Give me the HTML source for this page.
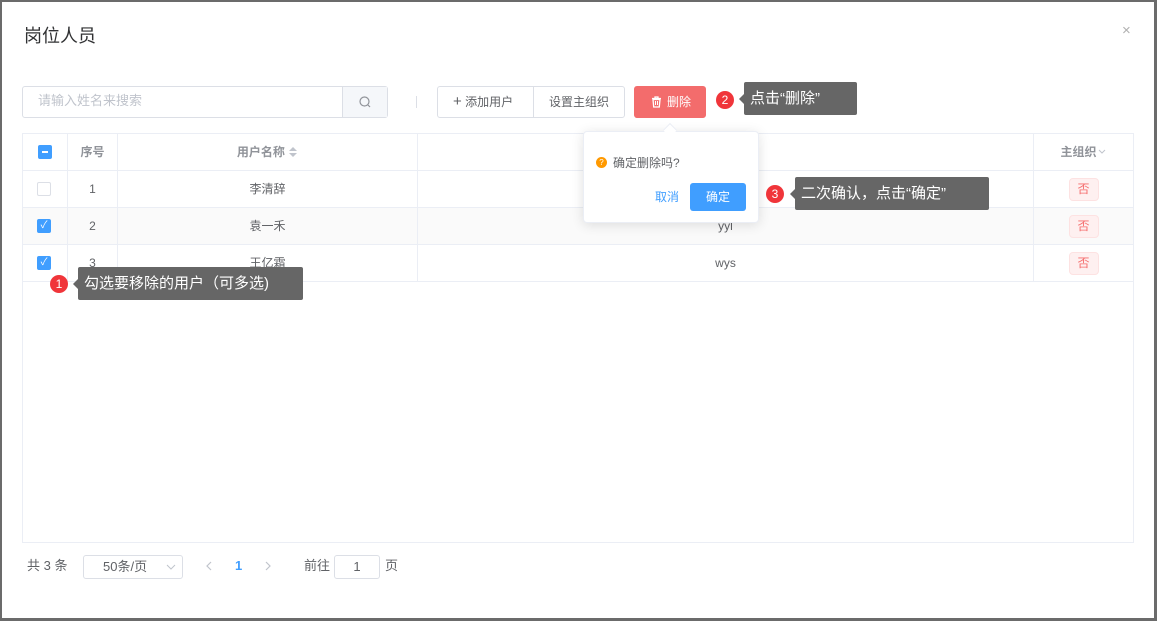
<!DOCTYPE html>
<html><head><meta charset="utf-8"><style>
*{box-sizing:border-box;margin:0;padding:0}
body{width:1157px;height:621px;background:#6b6b6b;font-family:"Liberation Sans","Noto Sans CJK SC",sans-serif;position:relative;overflow:hidden;font-size:12px;color:#606266}
.dlg{position:absolute;left:2px;top:2px;width:1152px;height:616px;background:#fff}
.a{position:absolute}
.title{left:22px;top:22px;font-size:18px;color:#303133;line-height:24px}
.tbl{left:22px;top:133px;width:1112px;height:410px;border:1px solid #ebeef5}
.row{position:absolute;left:0;width:1110px;height:37px;border-bottom:1px solid #ebeef5}
.c{position:absolute;top:0;height:36px;line-height:36px;text-align:center;border-right:1px solid #ebeef5}
.cb{position:absolute;left:14px;top:11px;width:14px;height:14px;border:1px solid #dcdfe6;border-radius:2px;background:#fff}
.cb.on{background:#409eff;border-color:#409eff}
.tag{display:inline-block;width:30px;height:23px;line-height:21px;border:1px solid #fde2e2;background:#fef0f0;color:#f56c6c;border-radius:4px;margin-top:7px}
.badge{width:18px;height:18px;border-radius:50%;background:#f0353a;color:#fff;text-align:center;line-height:18px;font-size:12px}
.tip{background:#666;color:#fff;font-size:15px;padding-left:6px;border-radius:2px}
.tip:before{content:"";position:absolute;left:-5px;top:50%;margin-top:-5px;border:5px solid transparent;border-left:0;border-right-color:#666}
.p{line-height:16px;font-size:13px}
</style></head><body>
<div class="dlg">
<div class="a title">岗位人员</div>
<div class="a" style="left:1120px;top:20px;color:#b0b0b0;font-size:15px">×</div>
</div>
<div class="a" style="left:22px;top:86px;width:366px;height:32px;border:1px solid #dcdfe6;border-radius:3px;"></div>
<div class="a" style="left:342px;top:87px;width:45px;height:30px;background:#f5f7fa;border-left:1px solid #dcdfe6"></div>
<svg class="a" style="left:358px;top:95px" width="14" height="14" viewBox="0 0 14 14"><circle cx="6.5" cy="6.5" r="4.5" fill="none" stroke="#909399" stroke-width="1.2"/><path d="M10 10l2 2" stroke="#909399" stroke-width="1.2"/></svg>
<div class="a" style="left:38px;top:93px;color:#c0c4cc;font-size:13px;line-height:16px">请输入姓名来搜索</div>
<div class="a" style="left:416px;top:96px;width:1px;height:12px;background:#dcdfe6"></div>
<div class="a" style="left:437px;top:86px;width:188px;height:32px;border:1px solid #dcdfe6;border-radius:3px"></div>
<div class="a" style="left:533px;top:87px;width:1px;height:30px;background:#dcdfe6"></div>
<div class="a" style="left:453px;top:94px;line-height:16px;color:#606266"><span style="font-size:15px">+</span> 添加用户</div>
<div class="a" style="left:549px;top:94px;line-height:16px">设置主组织</div>
<div class="a" style="left:634px;top:86px;width:72px;height:32px;background:#f36c6c;border-radius:3px;color:#fff;line-height:32px;padding-left:33px">删除</div>
<svg class="a" style="left:651px;top:96px" width="11" height="12" viewBox="0 0 11 12"><path d="M1 2.5h9M4 2.5V1h3v1.5M2 3.5l.7 7.5h5.6L9 3.5z" fill="none" stroke="#fff" stroke-width="1.3"/><path d="M4.5 5v4M6.5 5v4" stroke="#fff"/></svg>
<div class="a badge" style="left:716px;top:91px">2</div>
<div class="a tip" style="left:744px;top:82px;width:113px;height:33px;line-height:33px">点击“删除”</div>
<div class="a tbl">
<div class="row" style="top:0;color:#909399;font-weight:bold">
<div class="c" style="left:0;width:45px"><span class="cb on" style="left:15px"><span style="position:absolute;left:3px;top:5px;width:6px;height:2px;background:#fff"></span></span></div>
<div class="c" style="left:45px;width:50px">序号</div>
<div class="c" style="left:95px;width:300px">用户名称 <svg width="10" height="12" viewBox="0 0 10 12" style="vertical-align:-2px"><path d="M5 1l4 4H1zM5 11l4-4H1z" fill="#c0c4cc"/></svg></div>
<div class="c" style="left:395px;width:616px"></div>
<div class="c" style="left:1011px;width:99px;border:0">主组织<svg width="10" height="8" viewBox="0 0 10 8"><path d="M2 2l3 3 3-3" fill="none" stroke="#c0c4cc"/></svg></div>
</div>
<div class="row" style="top:37px"><div class="c" style="left:0;width:45px"><span class="cb"></span></div><div class="c" style="left:45px;width:50px">1</div><div class="c" style="left:95px;width:300px">李清辞</div><div class="c" style="left:395px;width:616px"></div><div class="c" style="left:1011px;width:99px;border:0"><span class="tag">否</span></div></div>
<div class="row" style="top:74px;background:#fafafa"><div class="c" style="left:0;width:45px"><span class="cb on" style="color:#fff;font-size:10px;line-height:12px">✓</span></div><div class="c" style="left:45px;width:50px">2</div><div class="c" style="left:95px;width:300px">袁一禾</div><div class="c" style="left:395px;width:616px">yyl</div><div class="c" style="left:1011px;width:99px;border:0"><span class="tag">否</span></div></div>
<div class="row" style="top:111px"><div class="c" style="left:0;width:45px"><span class="cb on" style="color:#fff;font-size:10px;line-height:12px">✓</span></div><div class="c" style="left:45px;width:50px">3</div><div class="c" style="left:95px;width:300px">王亿霜</div><div class="c" style="left:395px;width:616px">wys</div><div class="c" style="left:1011px;width:99px;border:0"><span class="tag">否</span></div></div>
</div>
<div class="a" style="left:583px;top:131px;width:176px;height:92px;background:#fff;border:1px solid #ebeef5;border-radius:4px;box-shadow:0 2px 12px rgba(0,0,0,.12)"></div>
<div class="a" style="left:665px;top:125px;width:10px;height:10px;background:#fff;transform:rotate(45deg);border-left:1px solid #ebeef5;border-top:1px solid #ebeef5"></div>
<div class="a" style="left:596px;top:157px;width:11px;height:11px;border-radius:50%;background:#ff9900;color:#fff;font-size:8px;text-align:center;line-height:11px">?</div>
<div class="a" style="left:613px;top:155px;line-height:16px">确定删除吗?</div>
<div class="a" style="left:655px;top:189px;color:#409eff;line-height:16px">取消</div>
<div class="a" style="left:690px;top:183px;width:56px;height:28px;background:#409eff;border-radius:3px;color:#fff;text-align:center;line-height:28px">确定</div>
<div class="a badge" style="left:766px;top:185px">3</div>
<div class="a tip" style="left:795px;top:177px;width:194px;height:33px;line-height:33px">二次确认，点击“确定”</div>
<div class="a badge" style="left:50px;top:275px">1</div>
<div class="a tip" style="left:78px;top:267px;width:225px;height:33px;line-height:33px">勾选要移除的用户（可多选)</div>
<div class="a p" style="left:27px;top:558px">共 3 条</div>
<div class="a" style="left:83px;top:555px;width:100px;height:24px;border:1px solid #dcdfe6;border-radius:3px;line-height:22px;padding-left:19px;font-size:13px">50条/页<svg style="position:absolute;right:6px;top:7px" width="10" height="8" viewBox="0 0 10 8"><path d="M1 2l4 4 4-4" fill="none" stroke="#c0c4cc"/></svg></div>
<svg class="a" style="left:205px;top:561px" width="8" height="10" viewBox="0 0 8 10"><path d="M6 1L2 5l4 4" fill="none" stroke="#c0c4cc" stroke-width="1.2"/></svg>
<div class="a p" style="left:235px;top:558px;color:#409eff;font-weight:bold">1</div>
<svg class="a" style="left:264px;top:561px" width="8" height="10" viewBox="0 0 8 10"><path d="M2 1l4 4-4 4" fill="none" stroke="#c0c4cc" stroke-width="1.2"/></svg>
<div class="a p" style="left:304px;top:558px">前往</div>
<div class="a" style="left:334px;top:555px;width:46px;height:24px;border:1px solid #dcdfe6;border-radius:3px;text-align:center;line-height:22px;font-size:13px">1</div>
<div class="a p" style="left:385px;top:558px">页</div>
</body></html>
